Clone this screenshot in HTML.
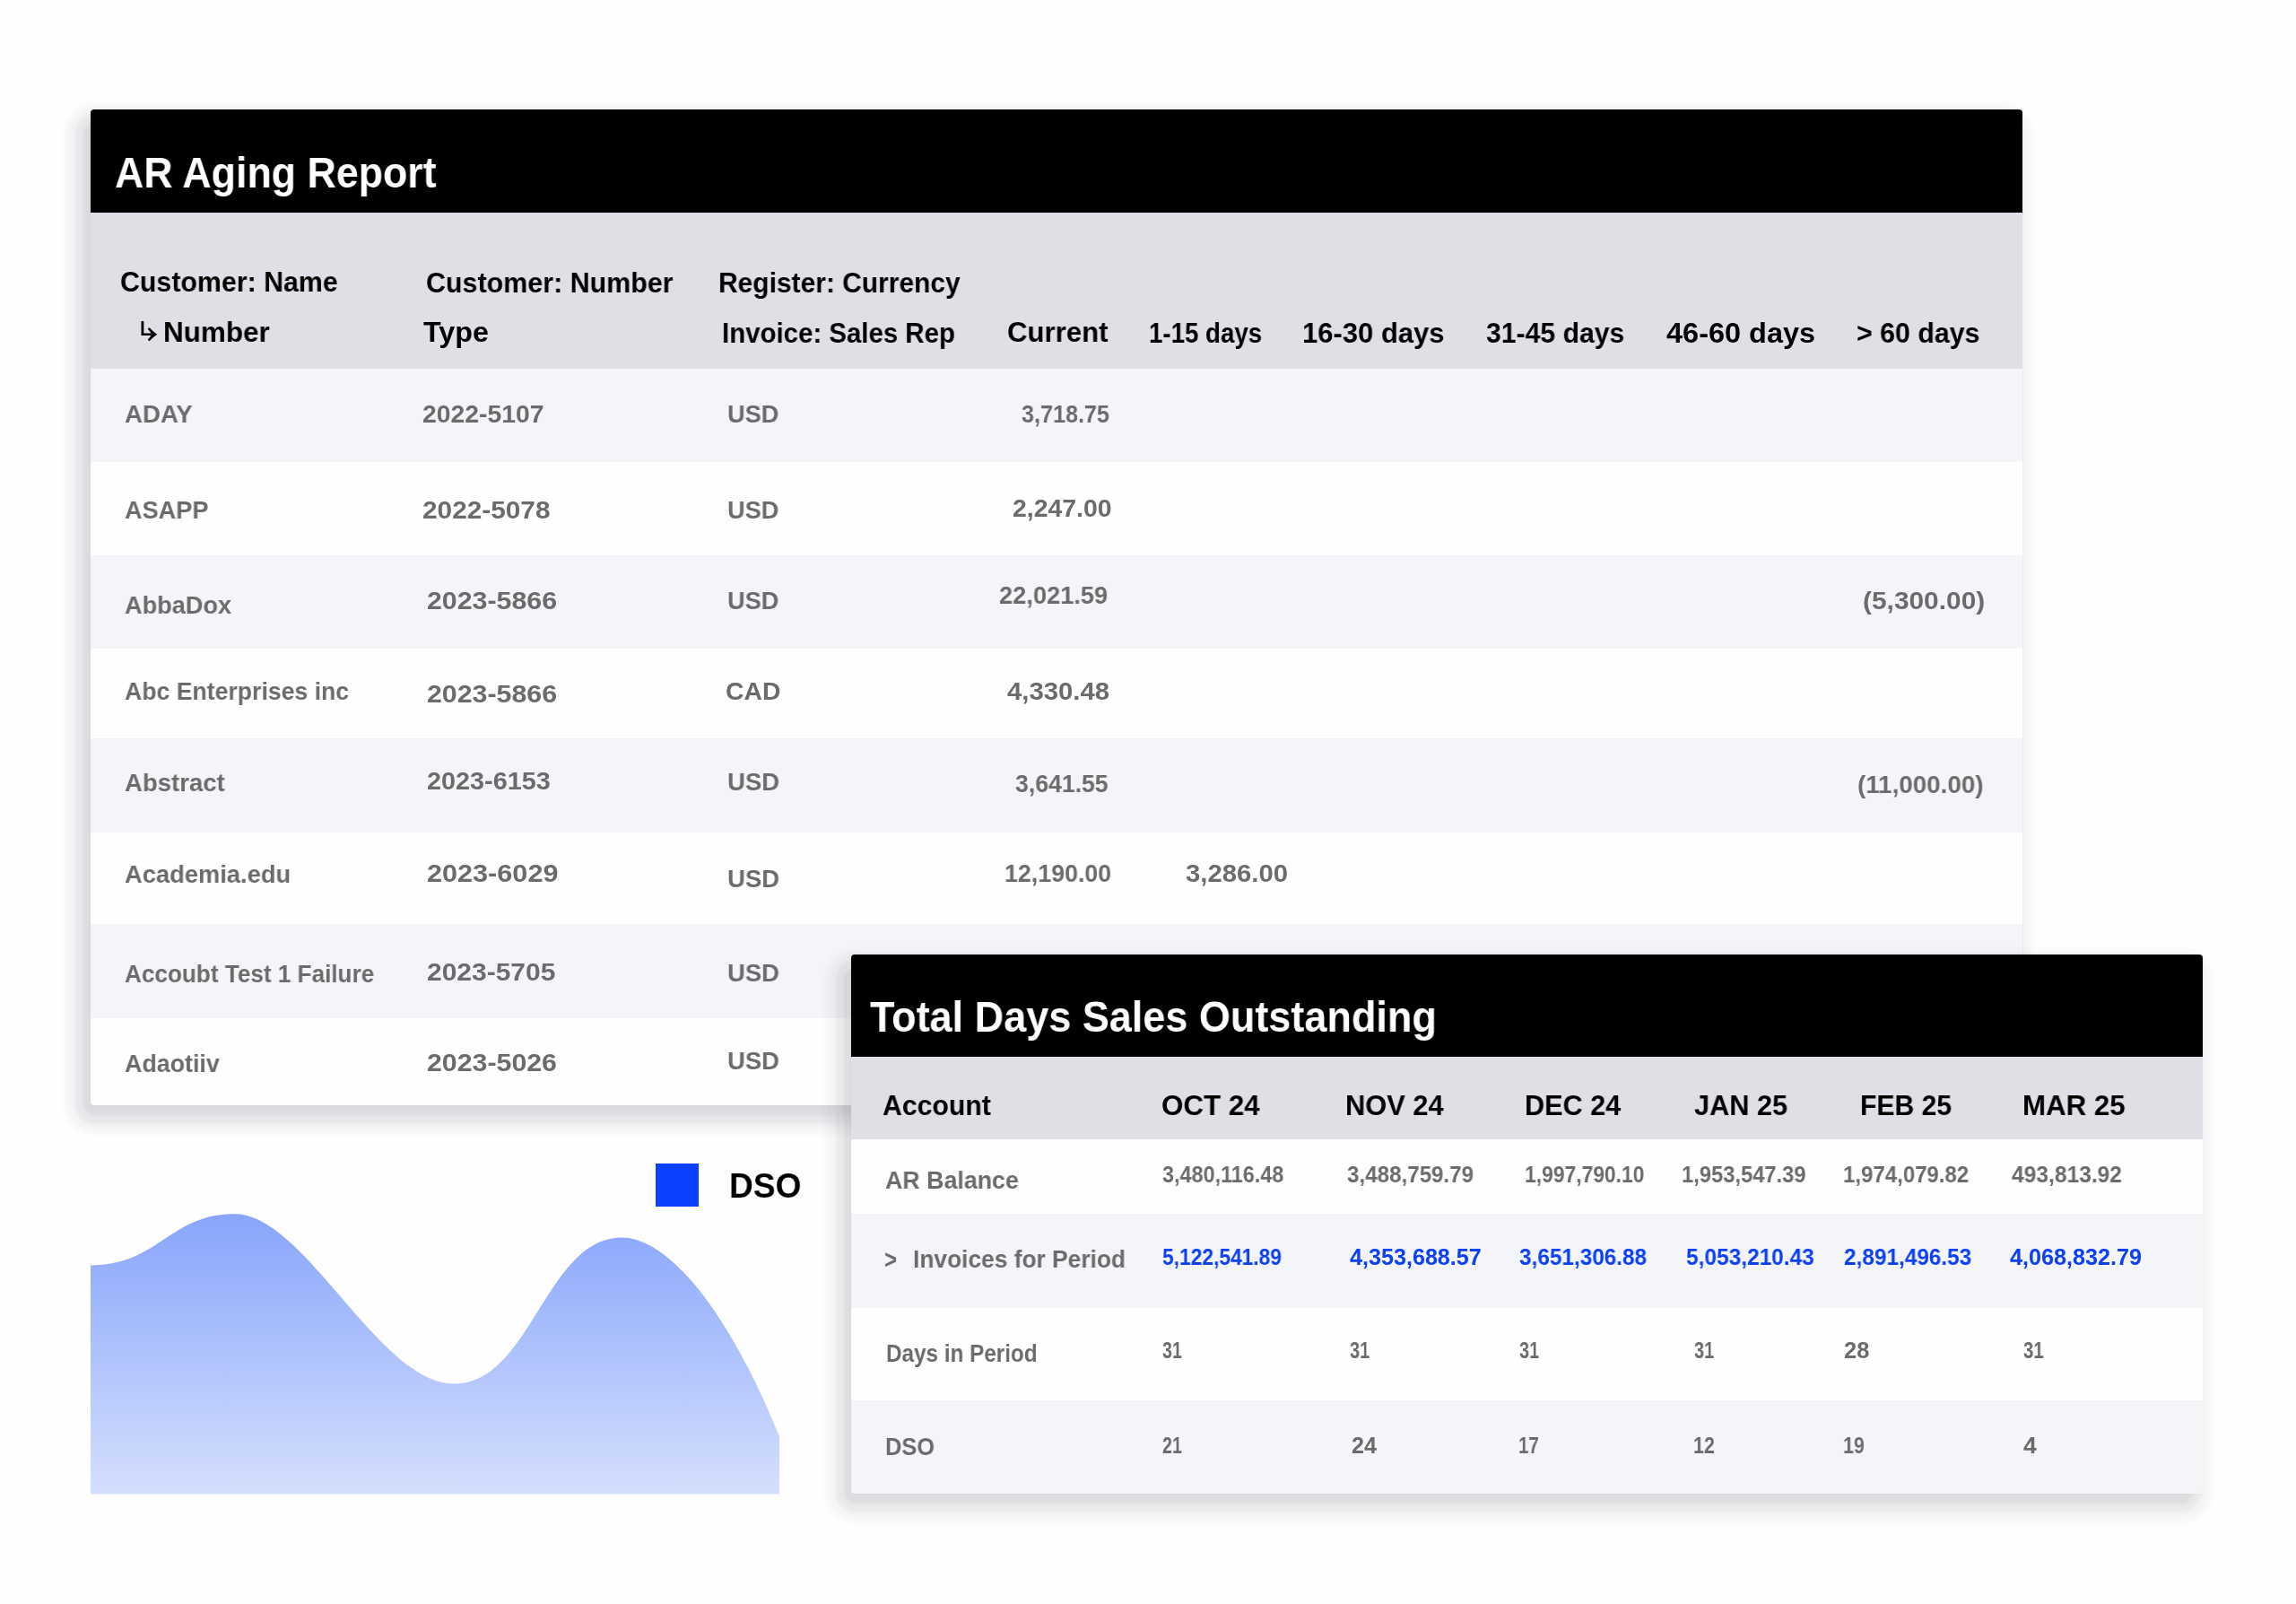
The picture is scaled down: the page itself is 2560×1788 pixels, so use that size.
<!DOCTYPE html>
<html><head><meta charset="utf-8"><title>AR Aging Report</title>
<style>
html,body{margin:0;padding:0;}
body{position:relative;width:2560px;height:1788px;overflow:hidden;background:#fefefe;font-family:"Liberation Sans",sans-serif;}
.t{position:absolute;white-space:nowrap;line-height:1;transform-origin:0 0;will-change:transform;}
.card{position:absolute;}
.card div{position:absolute;left:0;right:0;}
.card .shd{top:0;bottom:0;border-radius:14px;box-shadow:-9.5px 13px 4px -2px rgba(10,10,40,.056),-9.5px 13px 4px 7.5px rgba(10,10,40,.05),-9.5px 13px 4px 17px rgba(10,10,40,.022),-9.5px 13px 4px 20.6px rgba(10,10,40,.014);}
.card .ring{top:0;bottom:0;border-radius:4px;box-shadow:0 0 1.5px rgba(10,10,40,.10);}
.card .blk{border-radius:4px 4px 0 0;}
.card div:last-child{border-radius:0 0 4px 4px;}
.blk{background:#000;}
.gry{background:#dfe0e5;}
.str{background:#f4f5f9;}
.wht{background:#fefefe;}
svg{position:absolute;left:0;top:0;}
</style></head><body>
<div class="card" style="left:101px;top:122px;width:2154px;height:1110px;">
  <div class="shd"></div><div class="ring"></div>
  <div class="blk" style="top:0;height:115px"></div>
  <div class="gry" style="top:115px;height:174px"></div>
  <div class="str" style="top:289px;height:104px"></div>
  <div class="wht" style="top:393px;height:104px"></div>
  <div class="str" style="top:497px;height:104px"></div>
  <div class="wht" style="top:601px;height:100px"></div>
  <div class="str" style="top:701px;height:105px"></div>
  <div class="wht" style="top:806px;height:102px"></div>
  <div class="str" style="top:908px;height:105px"></div>
  <div class="wht" style="top:1013px;height:97px"></div>
</div>
<svg width="2560" height="1788" viewBox="0 0 2560 1788"><path fill="#000" d="M157.5,358.1h2.8v13.4h8.6v2.4h-11.4z M175.2,372.7 C172,370.5 169.3,367.8 166.6,365.2 Q165.2,365.4 164.9,367.1 C166.7,369 168.3,370.8 169.5,372.7 C168.3,374.6 166.7,376.4 164.9,378.3 Q165.2,380 166.6,380.2 C169.3,377.6 172,374.9 175.2,372.7 Z"/></svg>
<span class="t" style="left:127.9px;top:168.5px;font-size:47.38px;font-weight:700;color:#fff;transform:scaleX(0.944)">AR Aging Report</span>
<span class="t" style="left:134.4px;top:297.9px;font-size:31.98px;font-weight:700;color:#000;transform:scaleX(0.949)">Customer: Name</span>
<span class="t" style="left:474.5px;top:298.9px;font-size:31.98px;font-weight:700;color:#000;transform:scaleX(0.952)">Customer: Number</span>
<span class="t" style="left:800.5px;top:298.9px;font-size:31.98px;font-weight:700;color:#000;transform:scaleX(0.937)">Register: Currency</span>
<span class="t" style="left:181.6px;top:353.7px;font-size:31.98px;font-weight:700;color:#000;transform:scaleX(0.984)">Number</span>
<span class="t" style="left:471.6px;top:353.5px;font-size:31.98px;font-weight:700;color:#000;transform:scaleX(1.009)">Type</span>
<span class="t" style="left:805.2px;top:354.5px;font-size:31.98px;font-weight:700;color:#000;transform:scaleX(0.920)">Invoice: Sales Rep</span>
<span class="t" style="left:1122.8px;top:353.5px;font-size:31.98px;font-weight:700;color:#000;transform:scaleX(0.975)">Current</span>
<span class="t" style="left:1281.0px;top:354.5px;font-size:31.98px;font-weight:700;color:#000;transform:scaleX(0.865)">1-15 days</span>
<span class="t" style="left:1452.4px;top:354.5px;font-size:31.98px;font-weight:700;color:#000;transform:scaleX(0.969)">16-30 days</span>
<span class="t" style="left:1657.0px;top:354.5px;font-size:31.98px;font-weight:700;color:#000;transform:scaleX(0.943)">31-45 days</span>
<span class="t" style="left:1858.0px;top:354.5px;font-size:31.98px;font-weight:700;color:#000;transform:scaleX(1.016)">46-60 days</span>
<span class="t" style="left:2069.9px;top:354.5px;font-size:31.98px;font-weight:700;color:#000;transform:scaleX(0.949)">&gt; 60 days</span>
<span class="t" style="left:138.7px;top:446.5px;font-size:28.34px;font-weight:700;color:#6b6b6b;transform:scaleX(0.975)">ADAY</span>
<span class="t" style="left:471.0px;top:446.5px;font-size:28.34px;font-weight:700;color:#6b6b6b;">2022-5107</span>
<span class="t" style="left:810.8px;top:446.5px;font-size:28.34px;font-weight:700;color:#6b6b6b;transform:scaleX(0.960)">USD</span>
<span class="t" style="left:1139.0px;top:446.5px;font-size:28.34px;font-weight:700;color:#6b6b6b;transform:scaleX(0.888)">3,718.75</span>
<span class="t" style="left:138.7px;top:553.5px;font-size:28.34px;font-weight:700;color:#6b6b6b;transform:scaleX(0.957)">ASAPP</span>
<span class="t" style="left:471.0px;top:553.5px;font-size:28.34px;font-weight:700;color:#6b6b6b;transform:scaleX(1.052)">2022-5078</span>
<span class="t" style="left:810.8px;top:553.5px;font-size:28.34px;font-weight:700;color:#6b6b6b;transform:scaleX(0.960)">USD</span>
<span class="t" style="left:1128.5px;top:552.3px;font-size:28.34px;font-weight:700;color:#6b6b6b;transform:scaleX(1.003)">2,247.00</span>
<span class="t" style="left:138.7px;top:659.5px;font-size:28.34px;font-weight:700;color:#6b6b6b;transform:scaleX(0.958)">AbbaDox</span>
<span class="t" style="left:475.7px;top:654.5px;font-size:28.34px;font-weight:700;color:#6b6b6b;transform:scaleX(1.071)">2023-5866</span>
<span class="t" style="left:810.8px;top:654.5px;font-size:28.34px;font-weight:700;color:#6b6b6b;transform:scaleX(0.960)">USD</span>
<span class="t" style="left:1114.0px;top:648.5px;font-size:28.34px;font-weight:700;color:#6b6b6b;transform:scaleX(0.961)">22,021.59</span>
<span class="t" style="left:2076.9px;top:655.3px;font-size:28.34px;font-weight:700;color:#6b6b6b;transform:scaleX(1.055)">(5,300.00)</span>
<span class="t" style="left:138.7px;top:755.7px;font-size:28.34px;font-weight:700;color:#6b6b6b;transform:scaleX(0.940)">Abc Enterprises inc</span>
<span class="t" style="left:475.7px;top:758.5px;font-size:28.34px;font-weight:700;color:#6b6b6b;transform:scaleX(1.071)">2023-5866</span>
<span class="t" style="left:808.8px;top:755.5px;font-size:28.34px;font-weight:700;color:#6b6b6b;">CAD</span>
<span class="t" style="left:1123.3px;top:755.5px;font-size:28.34px;font-weight:700;color:#6b6b6b;transform:scaleX(1.035)">4,330.48</span>
<span class="t" style="left:138.7px;top:857.5px;font-size:28.34px;font-weight:700;color:#6b6b6b;transform:scaleX(0.972)">Abstract</span>
<span class="t" style="left:475.7px;top:855.9px;font-size:28.34px;font-weight:700;color:#6b6b6b;transform:scaleX(1.017)">2023-6153</span>
<span class="t" style="left:810.5px;top:856.5px;font-size:28.34px;font-weight:700;color:#6b6b6b;transform:scaleX(0.973)">USD</span>
<span class="t" style="left:1132.0px;top:859.1px;font-size:28.34px;font-weight:700;color:#6b6b6b;transform:scaleX(0.939)">3,641.55</span>
<span class="t" style="left:2071.4px;top:859.9px;font-size:28.34px;font-weight:700;color:#6b6b6b;transform:scaleX(0.980)">(11,000.00)</span>
<span class="t" style="left:138.7px;top:960.3px;font-size:28.34px;font-weight:700;color:#6b6b6b;transform:scaleX(0.964)">Academia.edu</span>
<span class="t" style="left:475.7px;top:959.3px;font-size:28.34px;font-weight:700;color:#6b6b6b;transform:scaleX(1.081)">2023-6029</span>
<span class="t" style="left:810.5px;top:964.5px;font-size:28.34px;font-weight:700;color:#6b6b6b;transform:scaleX(0.973)">USD</span>
<span class="t" style="left:1120.0px;top:959.1px;font-size:28.34px;font-weight:700;color:#6b6b6b;transform:scaleX(0.945)">12,190.00</span>
<span class="t" style="left:1322.0px;top:959.1px;font-size:28.34px;font-weight:700;color:#6b6b6b;transform:scaleX(1.034)">3,286.00</span>
<span class="t" style="left:138.9px;top:1070.5px;font-size:28.34px;font-weight:700;color:#6b6b6b;transform:scaleX(0.922)">Accoubt Test 1 Failure</span>
<span class="t" style="left:475.8px;top:1068.5px;font-size:28.34px;font-weight:700;color:#6b6b6b;transform:scaleX(1.058)">2023-5705</span>
<span class="t" style="left:810.6px;top:1069.5px;font-size:28.34px;font-weight:700;color:#6b6b6b;transform:scaleX(0.970)">USD</span>
<span class="t" style="left:138.9px;top:1171.1px;font-size:28.34px;font-weight:700;color:#6b6b6b;transform:scaleX(0.947)">Adaotiiv</span>
<span class="t" style="left:475.8px;top:1170.1px;font-size:28.34px;font-weight:700;color:#6b6b6b;transform:scaleX(1.070)">2023-5026</span>
<span class="t" style="left:810.6px;top:1167.5px;font-size:28.34px;font-weight:700;color:#6b6b6b;transform:scaleX(0.970)">USD</span>
<svg width="2560" height="1788" viewBox="0 0 2560 1788">
  <defs><linearGradient id="g" x1="0" y1="1353" x2="0" y2="1666" gradientUnits="userSpaceOnUse">
    <stop offset="0" stop-color="#88a5fb"/><stop offset="1" stop-color="#d5dffd"/></linearGradient></defs>
  <path fill="url(#g)" d="M101,1410.5 C176.7,1410.5 189.1,1353.2 262,1353.2 C339.7,1353.2 422.9,1542.6 506,1542.6 C592.3,1542.6 608.1,1379.4 693.5,1379.4 C740.6,1379.4 807.3,1449.4 869,1601.4 L869,1665.5 L101,1665.5 Z"/>
  <rect x="731" y="1297" width="48" height="48" fill="#0a40ff"/>
</svg>
<span class="t" style="left:813.3px;top:1303.1px;font-size:38.52px;font-weight:700;color:#000;transform:scaleX(0.964)">DSO</span>
<div class="card" style="left:949px;top:1064px;width:1507px;height:601px;">
  <div class="shd"></div><div class="ring"></div>
  <div class="blk" style="top:0;height:114px"></div>
  <div class="gry" style="top:114px;height:92px"></div>
  <div class="wht" style="top:206px;height:83px"></div>
  <div class="str" style="top:289px;height:105px"></div>
  <div class="wht" style="top:394px;height:103px"></div>
  <div class="str" style="top:497px;height:104px"></div>
</div>
<span class="t" style="left:969.8px;top:1108.9px;font-size:48.55px;font-weight:700;color:#fff;transform:scaleX(0.927)">Total Days Sales Outstanding</span>
<span class="t" style="left:983.5px;top:1217.2px;font-size:31.54px;font-weight:700;color:#000;transform:scaleX(0.959)">Account</span>
<span class="t" style="left:1295.0px;top:1217.2px;font-size:31.54px;font-weight:700;color:#000;transform:scaleX(0.994)">OCT 24</span>
<span class="t" style="left:1499.8px;top:1217.2px;font-size:31.54px;font-weight:700;color:#000;transform:scaleX(0.978)">NOV 24</span>
<span class="t" style="left:1700.3px;top:1217.2px;font-size:31.54px;font-weight:700;color:#000;transform:scaleX(0.972)">DEC 24</span>
<span class="t" style="left:1889.2px;top:1217.2px;font-size:31.54px;font-weight:700;color:#000;transform:scaleX(0.975)">JAN 25</span>
<span class="t" style="left:2073.9px;top:1217.2px;font-size:31.54px;font-weight:700;color:#000;transform:scaleX(0.956)">FEB 25</span>
<span class="t" style="left:2254.7px;top:1217.2px;font-size:31.54px;font-weight:700;color:#000;transform:scaleX(0.992)">MAR 25</span>
<span class="t" style="left:986.6px;top:1300.7px;font-size:28.49px;font-weight:700;color:#6b6b6b;transform:scaleX(0.940)">AR Balance</span>
<span class="t" style="left:1295.6px;top:1297.4px;font-size:25.15px;font-weight:700;color:#6b6b6b;transform:scaleX(0.930)">3,480,116.48</span>
<span class="t" style="left:1501.5px;top:1297.4px;font-size:25.15px;font-weight:700;color:#6b6b6b;transform:scaleX(0.961)">3,488,759.79</span>
<span class="t" style="left:1700.2px;top:1297.4px;font-size:25.15px;font-weight:700;color:#6b6b6b;transform:scaleX(0.909)">1,997,790.10</span>
<span class="t" style="left:1874.8px;top:1297.4px;font-size:25.15px;font-weight:700;color:#6b6b6b;transform:scaleX(0.944)">1,953,547.39</span>
<span class="t" style="left:2054.6px;top:1297.4px;font-size:25.15px;font-weight:700;color:#6b6b6b;transform:scaleX(0.955)">1,974,079.82</span>
<span class="t" style="left:2243.3px;top:1297.4px;font-size:25.15px;font-weight:700;color:#6b6b6b;transform:scaleX(0.977)">493,813.92</span>
<span class="t" style="left:986.0px;top:1388.5px;font-size:29.65px;font-weight:700;color:#6b6b6b;transform:scaleX(0.812)">&gt;</span>
<span class="t" style="left:1017.7px;top:1389.1px;font-size:28.49px;font-weight:700;color:#6b6b6b;transform:scaleX(0.924)">Invoices for Period</span>
<span class="t" style="left:1295.6px;top:1389.4px;font-size:25.15px;font-weight:700;color:#0b40f6;transform:scaleX(0.906)">5,122,541.89</span>
<span class="t" style="left:1505.4px;top:1389.4px;font-size:25.15px;font-weight:700;color:#0b40f6;transform:scaleX(0.997)">4,353,688.57</span>
<span class="t" style="left:1694.1px;top:1389.4px;font-size:25.15px;font-weight:700;color:#0b40f6;transform:scaleX(0.968)">3,651,306.88</span>
<span class="t" style="left:1880.0px;top:1389.4px;font-size:25.15px;font-weight:700;color:#0b40f6;transform:scaleX(0.973)">5,053,210.43</span>
<span class="t" style="left:2055.6px;top:1389.4px;font-size:25.15px;font-weight:700;color:#0b40f6;transform:scaleX(0.969)">2,891,496.53</span>
<span class="t" style="left:2240.8px;top:1389.4px;font-size:25.15px;font-weight:700;color:#0b40f6;transform:scaleX(1.002)">4,068,832.79</span>
<span class="t" style="left:988.3px;top:1494.1px;font-size:28.49px;font-weight:700;color:#6b6b6b;transform:scaleX(0.852)">Days in Period</span>
<span class="t" style="left:1295.6px;top:1493.4px;font-size:25.15px;font-weight:700;color:#6b6b6b;transform:scaleX(0.783)">31</span>
<span class="t" style="left:1505.4px;top:1493.4px;font-size:25.15px;font-weight:700;color:#6b6b6b;transform:scaleX(0.793)">31</span>
<span class="t" style="left:1694.1px;top:1493.4px;font-size:25.15px;font-weight:700;color:#6b6b6b;transform:scaleX(0.793)">31</span>
<span class="t" style="left:1888.8px;top:1493.4px;font-size:25.15px;font-weight:700;color:#6b6b6b;transform:scaleX(0.793)">31</span>
<span class="t" style="left:2055.6px;top:1493.4px;font-size:25.15px;font-weight:700;color:#6b6b6b;transform:scaleX(1.011)">28</span>
<span class="t" style="left:2256.0px;top:1493.4px;font-size:25.15px;font-weight:700;color:#6b6b6b;transform:scaleX(0.808)">31</span>
<span class="t" style="left:986.7px;top:1597.9px;font-size:28.49px;font-weight:700;color:#6b6b6b;transform:scaleX(0.893)">DSO</span>
<span class="t" style="left:1295.6px;top:1598.8px;font-size:25.15px;font-weight:700;color:#6b6b6b;transform:scaleX(0.783)">21</span>
<span class="t" style="left:1507.0px;top:1598.8px;font-size:25.15px;font-weight:700;color:#6b6b6b;transform:scaleX(0.993)">24</span>
<span class="t" style="left:1693.3px;top:1598.8px;font-size:25.15px;font-weight:700;color:#6b6b6b;transform:scaleX(0.816)">17</span>
<span class="t" style="left:1887.9px;top:1598.8px;font-size:25.15px;font-weight:700;color:#6b6b6b;transform:scaleX(0.854)">12</span>
<span class="t" style="left:2054.7px;top:1598.8px;font-size:25.15px;font-weight:700;color:#6b6b6b;transform:scaleX(0.852)">19</span>
<span class="t" style="left:2256.0px;top:1598.8px;font-size:25.15px;font-weight:700;color:#6b6b6b;transform:scaleX(1.057)">4</span>
</body></html>
